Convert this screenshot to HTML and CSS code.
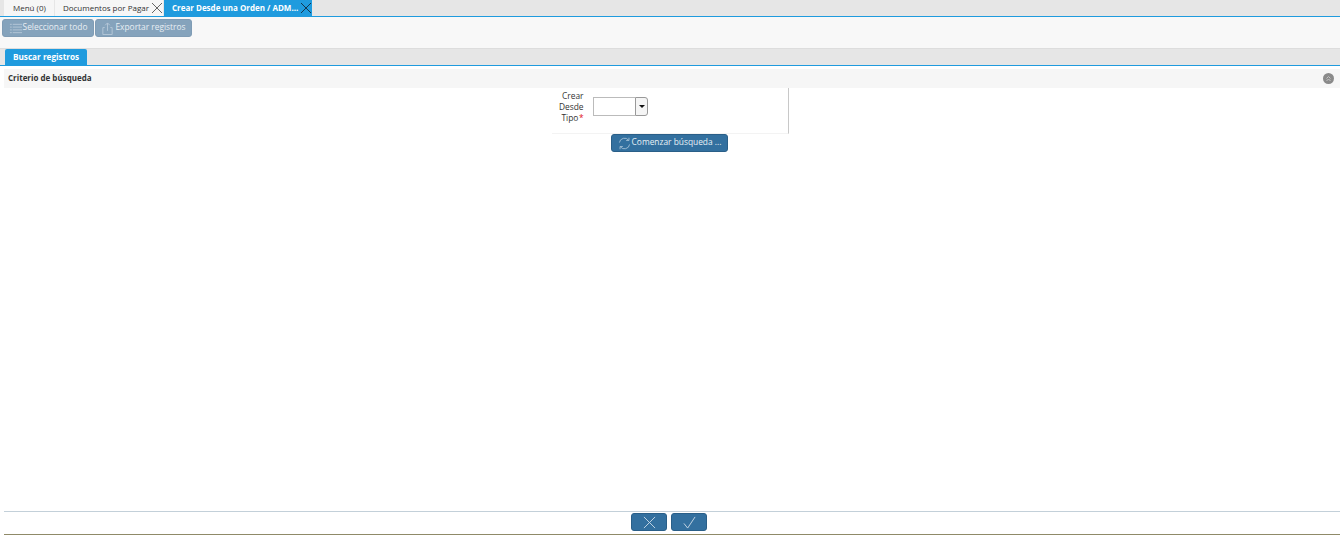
FILE: index.html
```html
<!DOCTYPE html>
<html lang="es">
<head>
  <meta charset="UTF-8" />
  <title>Crear Desde una Orden</title>
  <link rel="stylesheet" href="styles.css">
</head>
<body>
  <div class="window-tabs">
    <div class="wtab wtab-menu">Menú (0)</div>
    <div class="wtab wtab-close">Documentos por Pagar
      <svg class="x" viewBox="0 0 12 12"><path d="M1 1l10 10M11 1L1 11"/></svg>
    </div>
    <div class="wtab wtab-close active">Crear Desde una Orden / ADM...
      <svg class="x" viewBox="0 0 12 12"><path d="M1 1l10 10M11 1L1 11"/></svg>
    </div>
  </div>

  <div class="toolbar">
    <button class="btn btn-off btn-select">
      <svg class="ico" viewBox="0 0 14 14"><path d="M1 2.500h2M1 5.500h2M1 8.500h2M1 11.500h2M4 2.500h10M4 5.500h10M4 8.500h10M4 11.500h10"/></svg>
      <span>Seleccionar todo</span>
    </button>
    <button class="btn btn-off btn-export">
      <svg class="ico" viewBox="0 0 14 14"><path d="M4 6H2v7.500h10V6h-2M7 9.500V1M4.500 3.500L7 1l2.500 2.500"/></svg>
      <span>Exportar registros</span>
    </button>
  </div>

  <div class="sub-tabs">
    <div class="stab">Buscar registros</div>
  </div>

  <div class="content">
    <div class="section-head">
      <span>Criterio de búsqueda</span>
      <span class="collapse"><svg viewBox="0 0 11 11"><path d="M3.500 5.500L5.500 3.500l2 2M3.500 8L5.500 6l2 2"/></svg></span>
    </div>

    <div class="form-wrap">
      <div class="form-box">
        <label class="form-label">Crear Desde Tipo<b>*</b></label>
        <div class="combo">
          <div class="combo-input"></div>
          <div class="combo-arrow"></div>
        </div>
      </div>
    </div>

    <div class="search-row">
      <button class="btn btn-blue">
        <svg class="ico ico-refresh" viewBox="0 0 14 14"><path d="M1.500 6A5.600 5.600 0 0 1 11.500 3.500M12.500 8A5.600 5.600 0 0 1 2.500 10.500M11.800 .8v3h-3M2.200 13.200v-3h3"/></svg>
        <span>Comenzar búsqueda ...</span>
      </button>
    </div>
  </div>

  <div class="footer">
    <button class="btn btn-blue btn-foot">
      <svg class="ico-foot" viewBox="0 0 14 14"><path d="M1 1l12 12M13 1L1 13"/></svg>
    </button>
    <button class="btn btn-blue btn-foot">
      <svg class="ico-foot" viewBox="0 0 14 14"><path d="M1 8l4 5L13 1"/></svg>
    </button>
  </div>
</body>
</html>
```

FILE: styles.css
```css
html, body {
  margin: 0;
  height: 536px;
  overflow: hidden;
}

body {
  display: flex;
  flex-direction: column;
  background: #fff;
  color: #333;
  font-family: "Open Sans", sans-serif;
  font-size: 8.4px;
}

.window-tabs {
  display: flex;
  height: 16px;
  padding-left: 4px;
  background: #e6e6e6;
  border-bottom: 1px solid #1f9bde;
  font-size: 8px;
}

.wtab {
  display: flex;
  align-items: center;
  padding: 0 8px 2px;
  margin-right: 1px;
  background: #f6f6f6;
  white-space: nowrap;
}

.wtab-menu {
  padding: 0 8px 2px 9px;
}

.wtab-close {
  position: relative;
  padding-right: 14px;
}

.wtab.active {
  width: 148px;
  box-sizing: border-box;
  background: #1f9bde;
  color: #fff;
  font-weight: 700;
}

.x {
  position: absolute;
  right: 0;
  top: 2px;
  width: 12px;
  height: 12px;
  fill: none;
  stroke: #666;
  stroke-width: 1;
}

.active .x {
  stroke: #14364f;
}

.toolbar {
  display: flex;
  gap: 1px;
  height: 31px;
  padding: 2px 0 0 2px;
  box-sizing: border-box;
  background: #f8f8f8;
}

.btn {
  display: flex;
  align-items: center;
  justify-content: center;
  gap: 1px;
  height: 18px;
  padding: 0;
  border: 1px solid #6f8fa8;
  border-radius: 3px;
  color: #fff;
  font-family: inherit;
  font-size: 8.4px;
}

.btn span {
  margin-bottom: 3px;
}

.btn-off {
  background: #85a3bc;
  border-color: #7f9cb5;
  color: #e8eef3;
}

.btn-select {
  width: 92px;
}

.btn-export {
  width: 97px;
}

.btn-blue {
  background: #33709f;
  border-color: #2a5f88;
}

.ico {
  width: 13px;
  height: 13px;
  fill: none;
  stroke: #b5c8d8;
  stroke-width: 1;
}

.sub-tabs {
  height: 16px;
  padding-left: 5px;
  background: #e6e6e6;
  border-top: 1px solid #ddd;
  border-bottom: 1px solid #1f9bde;
}

.stab {
  width: 82px;
  height: 16px;
  line-height: 15px;
  text-align: center;
  border-radius: 2px 2px 0 0;
  background: #1f9bde;
  color: #fff;
  font-size: 8.2px;
  font-weight: 700;
}

.content {
  flex: 1;
  padding: 3px 0 0 4px;
}

.section-head {
  display: flex;
  align-items: center;
  justify-content: space-between;
  height: 19px;
  padding: 0 6px 2px 4px;
  box-sizing: border-box;
  background: #f6f6f6;
  font-size: 8px;
  font-weight: 700;
}

.collapse {
  width: 11px;
  height: 11px;
  margin-top: 2px;
  border-radius: 50%;
  background: #8a8a8a;
}

.collapse svg {
  display: block;
  fill: none;
  stroke: #c4c4c4;
  stroke-width: 1;
}

.form-wrap {
  display: flex;
  justify-content: center;
  padding-right: 4px;
}

.form-box {
  display: flex;
  width: 237px;
  height: 46px;
  box-sizing: border-box;
  padding: 2px 0 0 4px;
  border-right: 1px solid #c8c8c8;
  border-bottom: 1px solid #f3f3f3;
}

.form-label {
  width: 28px;
  line-height: 11px;
  text-align: right;
}

.form-label b {
  margin-left: 0.5px;
  color: #e01020;
  font-weight: 400;
}

.combo {
  display: flex;
  height: 19px;
  margin: 7px 0 0 9px;
}

.combo-input {
  width: 41px;
  border: 1px solid #bbb;
  border-right: 0;
  background: #fff;
}

.combo-arrow {
  position: relative;
  width: 11px;
  border: 1px solid #999;
  border-radius: 0 3px 3px 0;
  background: #f5f5f5;
}

.combo-arrow::after {
  content: "";
  position: absolute;
  left: 3px;
  top: 7px;
  border: 3px solid transparent;
  border-top: 3px solid #111;
}

.search-row {
  display: flex;
  justify-content: center;
  padding-right: 5px;
}

.search-row .btn {
  width: 117px;
  color: #e8f0f6;
}

.ico-refresh {
  stroke: #9fbcd3;
}

.footer {
  display: flex;
  justify-content: center;
  gap: 4px;
  height: 21px;
  margin: 0 0 1px 4px;
  padding: 1px 6px 0 0;
  border-top: 1px solid #c3d0d9;
  border-bottom: 1px solid #8f8a68;
}

.btn-foot {
  width: 36px;
}

.ico-foot {
  width: 13px;
  height: 13px;
  fill: none;
  stroke: #c9d9e6;
  stroke-width: 1;
}
```
